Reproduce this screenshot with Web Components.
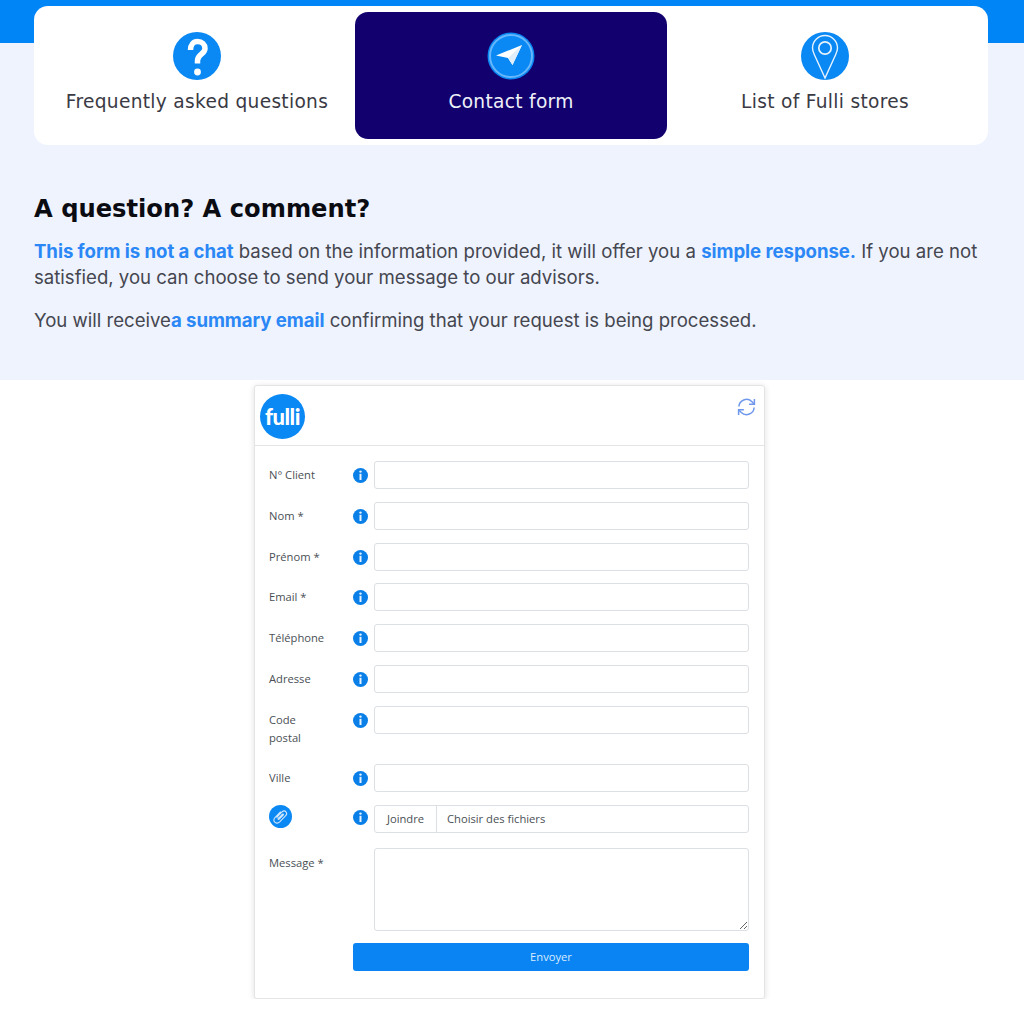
<!DOCTYPE html>
<html lang="en">
<head>
<meta charset="utf-8">
<title>Contact form</title>
<style>
  html, body { margin: 0; background: #fff; }
  body { font-family: "Inter", "Liberation Sans", sans-serif; }
  intro-text p { margin: 0 0 17px; }
  intro-text b { color: #2a87f5; font-weight: 700; letter-spacing: -.05px; }
</style>
</head>
<body>
<contact-page>
  <nav-tabs slot="tabs">
    <nav-tab label="Frequently asked questions" icon="question"></nav-tab>
    <nav-tab label="Contact form" icon="telegram" active></nav-tab>
    <nav-tab label="List of Fulli stores" icon="pin"></nav-tab>
  </nav-tabs>
  <intro-text slot="intro" heading="A question? A comment?">
    <p><b>This form is not a chat</b> based on the information provided, it will offer you a <b>simple response.</b> If you are not<br>satisfied, you can choose to send your message to our advisors.</p>
    <p>You will receive<b>a summary email</b> confirming that your request is being processed.</p>
  </intro-text>
  <form-card slot="form">
    <form-row label="N° Client"></form-row>
    <form-row label="Nom *"></form-row>
    <form-row label="Prénom *"></form-row>
    <form-row label="Email *"></form-row>
    <form-row label="Téléphone"></form-row>
    <form-row label="Adresse"></form-row>
    <form-row label="Code postal"></form-row>
    <form-row label="Ville"></form-row>
    <file-row></file-row>
    <message-row label="Message *"></message-row>
    <send-row label="Envoyer"></send-row>
  </form-card>
</contact-page>

<script>
  const ICONS = {
    question: `
      <svg width="48" height="48" viewBox="0 0 48 48">
        <circle cx="24" cy="24" r="24" fill="#0a88f3"/>
        <path d="M17.500 18c0-5.500 3-8.500 7-8.500 4.500 0 7.500 3 7.500 7 0 5.500-7.500 6-7.500 12v3" fill="none" stroke="#fff" stroke-width="5.500"/>
        <circle cx="24.500" cy="40" r="3.400" fill="#fff"/>
      </svg>`,
    telegram: `
      <svg width="48" height="48" viewBox="0 0 48 48">
        <circle cx="24" cy="24" r="23.500" fill="#0a88f3"/>
        <circle cx="24" cy="24" r="21" fill="none" stroke="#66b6fb" stroke-width="2"/>
        <path d="M35 13 9 23.500l12 2.500 4.500 7z" fill="#fff"/>
        <path d="M35 13 21 26l4.500 7z" fill="#e2eefa"/>
      </svg>`,
    pin: `
      <svg width="48" height="48" viewBox="0 0 48 48">
        <circle cx="24" cy="24" r="24" fill="#0a88f3"/>
        <path d="M24 46 13.500 23c-1-2-2-4-2-7a12.500 12.500 0 0 1 25 0c0 3-1 5-2 7z" fill="none" stroke="#e6f3fe" stroke-width="1.400"/>
        <circle cx="24" cy="16" r="6.200" fill="none" stroke="#e6f3fe" stroke-width="1.700"/>
      </svg>`,
  };

  class ContactPage extends HTMLElement {
    constructor() {
      super();
      this.attachShadow({ mode: "open" });
      this.shadowRoot.innerHTML = `
        <style>
          :host { display: block; }
          .hero {
            height: 380px;
            box-sizing: border-box;
            padding: 6px 36px 0 34px;
            background: linear-gradient(#0085f6 43px, #eef3fe 43px);
          }
          .below {
            display: flex;
            justify-content: center;
            padding: 5px 5px 0 0;
          }
        </style>
        <div class="hero">
          <slot name="tabs"></slot>
          <slot name="intro"></slot>
        </div>
        <div class="below"><slot name="form"></slot></div>
      `;
    }
  }

  class NavTabs extends HTMLElement {
    constructor() {
      super();
      this.attachShadow({ mode: "open" });
      this.shadowRoot.innerHTML = `
        <style>
          :host {
            display: grid;
            grid-template-columns: repeat(3, 1fr);
            padding: 6px;
            background: #fff;
            border-radius: 14px;
          }
        </style>
        <slot></slot>
      `;
    }
  }

  class NavTab extends HTMLElement {
    constructor() {
      super();
      this.attachShadow({ mode: "open" });
    }

    connectedCallback() {
      this.shadowRoot.innerHTML = `
        <style>
          :host {
            display: flex;
            flex-direction: column;
            align-items: center;
            height: 127px;
            box-sizing: border-box;
            padding-top: 20px;
            border-radius: 13px;
            color: #3a3a44;
            font-family: "DejaVu Sans", sans-serif;
            font-size: 18.600px;
            letter-spacing: .3px;
          }
          :host([active]) { background: #12006e; color: #eef1f8; margin: 0 1px; }
          svg { display: block; }
          span { margin-top: 11px; line-height: 22px; white-space: nowrap; }
        </style>
        ${ICONS[this.getAttribute("icon")]}
        <span>${this.getAttribute("label")}</span>
      `;
    }
  }

  class IntroText extends HTMLElement {
    constructor() {
      super();
      this.attachShadow({ mode: "open" });
    }

    connectedCallback() {
      this.shadowRoot.innerHTML = `
        <style>
          :host {
            display: block;
            padding-top: 49px;
            color: #45464f;
            font-family: "Inter", "Liberation Sans", sans-serif;
            font-size: 18.600px;
            line-height: 26px;
          }
          h2 {
            margin: 0 0 14px;
            color: #0b0b12;
            font-family: "DejaVu Sans", sans-serif;
            font-size: 24.200px;
            font-weight: 700;
            line-height: 30px;
          }
        </style>
        <h2>${this.getAttribute("heading")}</h2>
        <slot></slot>
      `;
    }
  }

  class FormCard extends HTMLElement {
    constructor() {
      super();
      this.attachShadow({ mode: "open" });
      this.shadowRoot.innerHTML = `
        <style>
          :host {
            display: block;
            width: 511px;
            box-sizing: border-box;
            border: 1px solid #e4e4e4;
            border-radius: 3px;
            box-shadow: 0 1px 6px rgba(0, 0, 0, .12);
            background: #fff;
            font-family: "Open Sans", "Liberation Sans", sans-serif;
            font-size: 11.200px;
            color: #4a4f55;
          }
          header {
            display: flex;
            justify-content: space-between;
            height: 60px;
            box-sizing: border-box;
            padding: 8px 8px 0 5px;
            border-bottom: 1px solid #e4e4e4;
          }
          .logo {
            display: flex;
            align-items: center;
            justify-content: center;
            width: 45px;
            height: 45px;
            border-radius: 50%;
            background: #0a88f3;
            color: #fff;
            font-family: "Lato", sans-serif;
            font-size: 22px;
            font-weight: 900;
            letter-spacing: -.5px;
          }
          .refresh { margin-top: 3px; }
          main { padding: 15px 15px 27px 14px; }
        </style>
        <header>
          <div class="logo">fulli</div>
          <svg class="refresh" width="19" height="20" viewBox="0 0 20 20" fill="none" stroke="#6f97ec" stroke-width="1.600">
            <path d="M2 9.500A8 8 0 0 1 15.500 4.200L18 6.800"/>
            <path d="M18.300 1.500v5.600h-5.600"/>
            <path d="M18 10.500A8 8 0 0 1 4.500 15.800L2 13.200"/>
            <path d="M1.700 18.500v-5.600h5.600"/>
          </svg>
        </header>
        <main><slot></slot></main>
      `;
    }
  }

  const ROW_STYLE = `
    :host {
      display: grid;
      grid-template-columns: 84px 21px 1fr;
      margin-bottom: 12.750px;
    }
    label { padding: 5px 0 3.500px; line-height: 18.500px; }
    info-dot { margin-top: 7px; }
    .field {
      display: block;
      width: 100%;
      height: 28px;
      box-sizing: border-box;
      border: 1px solid #dcdfe3;
      border-radius: 3px;
      background: #fff;
      font: inherit;
      color: inherit;
      outline: none;
    }
  `;

  class InfoDot extends HTMLElement {
    constructor() {
      super();
      this.attachShadow({ mode: "open" });
      this.shadowRoot.innerHTML = `
        <style>:host { display: block; width: 15px; height: 15px; } svg { display: block; }</style>
        <svg width="15" height="15" viewBox="0 0 15 15">
          <circle cx="7.500" cy="7.500" r="7.500" fill="#0a7fe8"/>
          <circle cx="7.500" cy="3.600" r="1.200" fill="#e8f3fd"/>
          <rect x="6.500" y="5.800" width="2" height="6.200" fill="#e8f3fd"/>
        </svg>
      `;
    }
  }

  class FormRow extends HTMLElement {
    constructor() {
      super();
      this.attachShadow({ mode: "open" });
    }

    connectedCallback() {
      this.shadowRoot.innerHTML = `
        <style>${ROW_STYLE} label { padding-right: 26px; }</style>
        <label>${this.getAttribute("label")}</label>
        <info-dot></info-dot>
        <input class="field" type="text">
      `;
    }
  }

  class FileRow extends HTMLElement {
    constructor() {
      super();
      this.attachShadow({ mode: "open" });
      this.shadowRoot.innerHTML = `
        <style>
          ${ROW_STYLE}
          :host { margin-bottom: 15px; }
          info-dot { margin-top: 5.500px; }
          .clip { display: block; }
          .file { display: flex; align-items: center; }
          .join {
            width: 62px;
            height: 100%;
            box-sizing: border-box;
            border-right: 1px solid #dcdfe3;
            text-align: center;
            line-height: 26px;
          }
          .name { padding-left: 10px; }
        </style>
        <svg class="clip" width="23" height="23" viewBox="0 0 23 23" fill="none">
          <circle cx="11.500" cy="11.500" r="11.500" fill="#0a88f3"/>
          <path d="M7.500 12.500l5.500-5.700c1.300-1.300 3-1.300 4 0 1 1.200.8 2.700-.3 3.800l-6 6.200c-1.700 1.600-3.800 1.700-5 .4-1.200-1.300-1-3.200.5-4.800l5.500-5.700M10.500 12.300l3-3.100c.6-.6 1.300.2.700.8l-4 4.200c-.7.700-1.700-.1-1-1z" stroke="#cfe6fb" stroke-width="1.100"/>
        </svg>
        <info-dot></info-dot>
        <div class="field file">
          <div class="join">Joindre</div>
          <div class="name">Choisir des fichiers</div>
        </div>
      `;
    }
  }

  class MessageRow extends HTMLElement {
    constructor() {
      super();
      this.attachShadow({ mode: "open" });
    }

    connectedCallback() {
      this.shadowRoot.innerHTML = `
        <style>
          ${ROW_STYLE}
          :host { margin-bottom: 12px; }
          textarea.field { grid-column: 3; height: 83px; }
          label { grid-column: 1 / 3; padding-top: 6px; }
        </style>
        <label>${this.getAttribute("label")}</label>
        <textarea class="field"></textarea>
      `;
    }
  }

  class SendRow extends HTMLElement {
    constructor() {
      super();
      this.attachShadow({ mode: "open" });
    }

    connectedCallback() {
      this.shadowRoot.innerHTML = `
        <style>
          :host { display: block; padding-left: 84px; }
          button {
            display: block;
            width: 100%;
            height: 28px;
            border: none;
            border-radius: 3px;
            background: #0a83f3;
            color: #d9ecfd;
            font: inherit;
          }
        </style>
        <button type="button">${this.getAttribute("label")}</button>
      `;
    }
  }

  customElements.define("info-dot", InfoDot);
  customElements.define("form-row", FormRow);
  customElements.define("file-row", FileRow);
  customElements.define("message-row", MessageRow);
  customElements.define("send-row", SendRow);
  customElements.define("form-card", FormCard);
  customElements.define("intro-text", IntroText);
  customElements.define("nav-tab", NavTab);
  customElements.define("nav-tabs", NavTabs);
  customElements.define("contact-page", ContactPage);
</script>
</body>
</html>
